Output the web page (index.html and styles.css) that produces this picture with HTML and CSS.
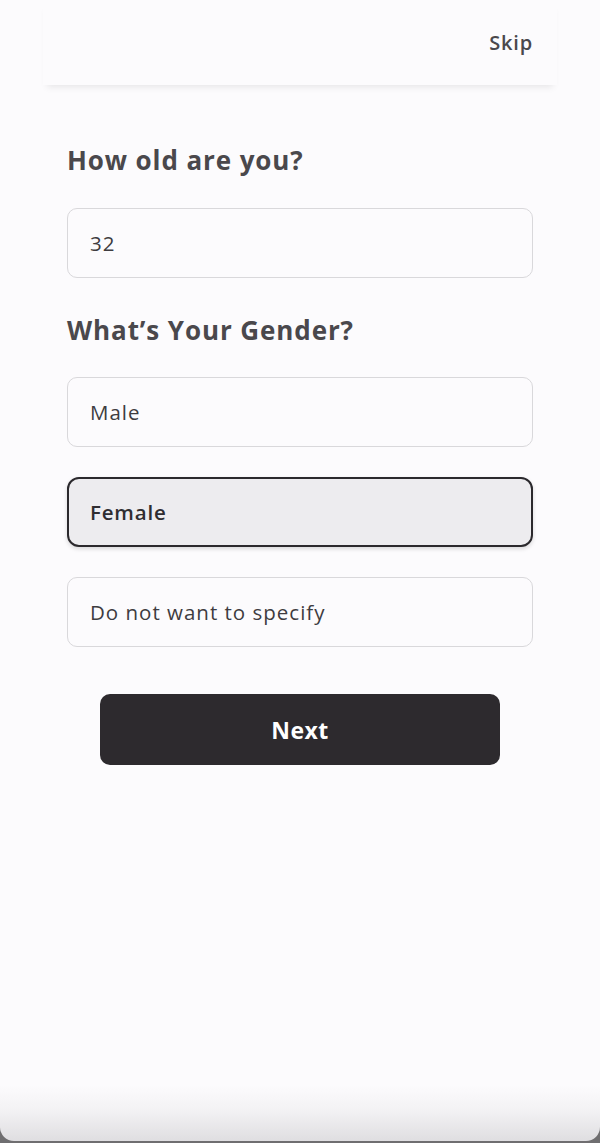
FILE: index.html
```html
<!DOCTYPE html>
<html lang="en">
<head>
<meta charset="utf-8">
<title>Profile</title>
<link rel="stylesheet" href="styles.css">
</head>
<body>
<div class="screen">
  <header class="topbar">
    <span class="skip">Skip</span>
  </header>
  <main class="content">
    <h2 class="question q-age">How old are you?</h2>
    <div class="field">32</div>
    <h2 class="question q-gender">What’s Your Gender?</h2>
    <div class="options">
      <div class="field">Male</div>
      <div class="field selected">Female</div>
      <div class="field">Do not want to specify</div>
    </div>
    <div class="actions">
      <button class="next">Next</button>
    </div>
  </main>
</div>
</body>
</html>
```

FILE: styles.css
```css
* { box-sizing: border-box; }
html, body { margin: 0; padding: 0; }
body {
  background: #6f6e70;
  font-family: "Open Sans", "Noto Sans", sans-serif;
  color: #48464a;
  height: 1143px;
  overflow: hidden;
}
.screen {
  height: 1141px;
  background: linear-gradient(to bottom, #fcfbfd 0, #fcfbfd 1085px, #f3f2f4 1110px, #dfdee1 1141px);
  border-radius: 0 0 14px 14px;
  display: flex;
  flex-direction: column;
}
.topbar {
  height: 85px;
  margin: 0 43px;
  padding-right: 24px;
  display: flex;
  justify-content: flex-end;
  align-items: flex-start;
  background: #fcfbfd;
  box-shadow: 0 6px 7px -4px rgba(0, 0, 0, 0.09);
}
.skip {
  margin-top: 29px;
  font-size: 20px;
  font-weight: 600;
  color: #4a484c;
  letter-spacing: 0.8px;
}
.content {
  padding: 0 67px;
  display: flex;
  flex-direction: column;
}
.question {
  margin: 0;
  font-size: 26px;
  line-height: 34px;
  font-weight: 700;
  color: #4a484c;
  letter-spacing: 0.9px;
}
.q-age { margin-top: 58px; margin-bottom: 31px; }
.q-gender { margin-top: 35px; margin-bottom: 30px; }
.field {
  height: 70px;
  border: 1px solid #d9d8db;
  border-radius: 10px;
  padding: 0 22px;
  display: flex;
  align-items: center;
  font-size: 20.5px;
  color: #3e3c40;
  background: #fcfbfd;
  letter-spacing: 1px;
}
.options {
  display: flex;
  flex-direction: column;
  gap: 30px;
}
.field.selected {
  background: #edecef;
  border: 2px solid #2b292d;
  border-radius: 12px;
  padding: 0 21px;
  font-weight: 600;
  color: #2f2d31;
  letter-spacing: 0.8px;
  box-shadow: 0 2px 4px rgba(0, 0, 0, 0.14);
}
.actions {
  display: flex;
  justify-content: center;
  margin-top: 47px;
}
.next {
  width: 400px;
  height: 71px;
  border: none;
  border-radius: 10px;
  background: #2d2a2e;
  color: #ffffff;
  font-family: "Open Sans", "Noto Sans", sans-serif;
  font-size: 23px;
  font-weight: 700;
  letter-spacing: 0.5px;
}
```
